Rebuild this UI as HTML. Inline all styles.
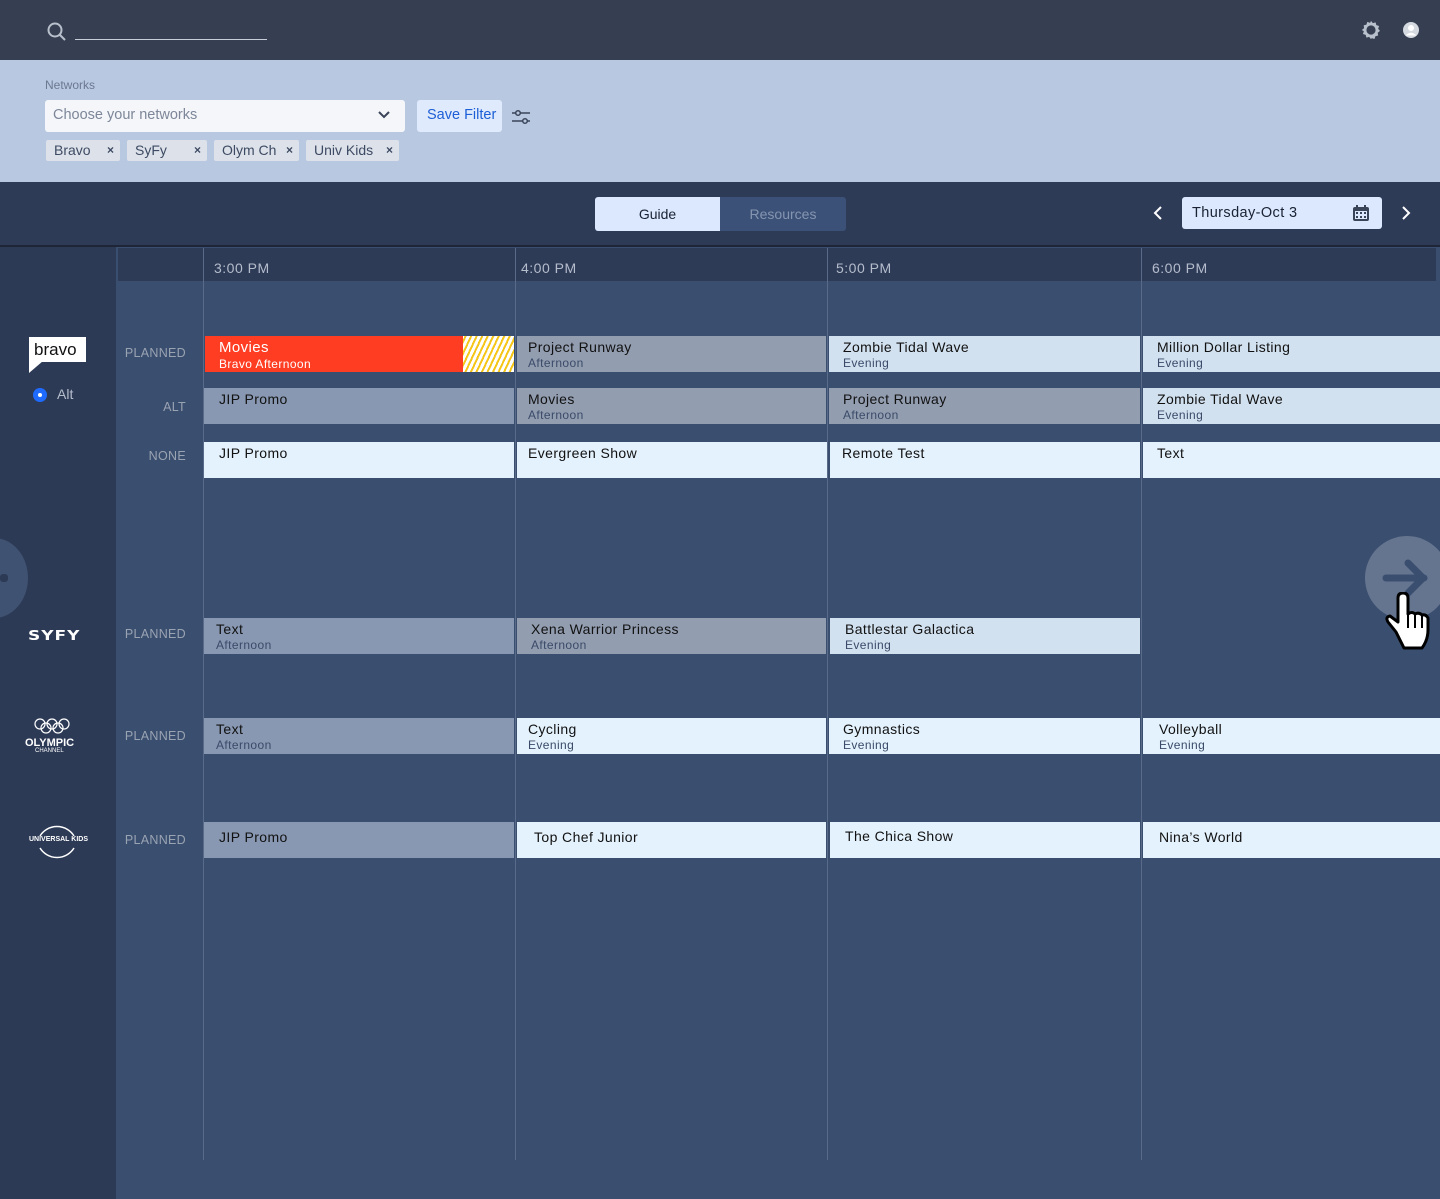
<!DOCTYPE html><html><head><style>
*{margin:0;padding:0;box-sizing:border-box}
body{width:1440px;height:1199px;overflow:hidden;background:#3a4e6f;font-family:"Liberation Sans",sans-serif;position:relative}
.a{position:absolute}
.b{position:absolute;height:36px;padding:3px 0 0 14px;color:#111;font-size:14px;letter-spacing:.4px}
.b small{display:block;font-size:12px;color:#3a4a68;margin-top:1px}
.g{background:#929db0}.gb{background:#8898b2}.l{background:#d2e1f0}.w{background:#e4f2fd}
.lab{position:absolute;width:70px;text-align:right;left:116px;color:#9aa3b2;font-size:12.5px;letter-spacing:.3px}
.vl{position:absolute;top:248px;height:912px;width:1px;background:#5a6b89}
.tm{position:absolute;top:260px;color:#b5bdcc;font-size:14px;letter-spacing:.5px}
.chip{position:absolute;top:140px;height:21px;background:#dde2ea;border-radius:2px;color:#3d4a63;font-size:14px;padding:2px 0 0 8px;white-space:nowrap}
.chip i{position:absolute;right:6px;top:3px;font-style:normal;font-size:12px;font-weight:bold}
</style></head><body>
<div class="a" style="left:0;top:0;width:1440px;height:60px;background:#363f52"></div>
<svg class="a" style="left:46px;top:21px" width="22" height="22"><circle cx="9" cy="9" r="6.5" stroke="#b8c0cc" stroke-width="2" fill="none"/><path d="M14 14l5 5" stroke="#b8c0cc" stroke-width="2"/></svg>
<div class="a" style="left:75px;top:39px;width:192px;height:1px;background:#c8ced8"></div>
<svg class="a" style="left:1360px;top:19px" width="22" height="22" viewBox="0 0 24 24"><path d="M12 2l2 2.5 3-.8.8 3 3 1-1 3 2 2.3-2.5 2 .5 3-3 .8-1 3-3-1L12 22l-2-2.5-3 .8-.8-3-3-1 1-3L2 12l2.5-2-.5-3 3-.8 1-3 3 1z" fill="#b8c0cc"/><circle cx="12" cy="12" r="5" fill="#363f52"/></svg>
<svg class="a" style="left:1402px;top:21px" width="18" height="18"><circle cx="9" cy="9" r="8" fill="#d5d9e0"/><circle cx="9" cy="7" r="3" fill="#fff"/><path d="M3.5 14.5Q9 9 14.5 14.5" fill="#fff"/></svg>
<div class="a" style="left:0;top:60px;width:1440px;height:122px;background:#b7c8e0"></div>
<div class="a" style="left:45px;top:78px;font-size:12px;color:#6c7890">Networks</div>
<div class="a" style="left:45px;top:100px;width:360px;height:32px;background:#f4f6f9;border-radius:3px;color:#7d8799;font-size:14.5px;padding:7px 0 0 8px">Choose your networks</div>
<svg class="a" style="left:377px;top:110px" width="14" height="10"><path d="M2 2l5 5 5-5" stroke="#3a4458" stroke-width="2" fill="none"/></svg>
<div class="a" style="left:417px;top:100px;width:85px;height:32px;background:#dfeafc;border-radius:3px;color:#1d5fd6;font-size:14.5px;padding:7px 0 0 10px">Save Filter</div>
<svg class="a" style="left:511px;top:108px" width="20" height="18"><path d="M1 5h18M1 13h18" stroke="#3a4458" stroke-width="1.6"/><circle cx="7" cy="5" r="2.3" fill="#b7c8e0" stroke="#3a4458" stroke-width="1.5"/><circle cx="14" cy="13" r="2.3" fill="#b7c8e0" stroke="#3a4458" stroke-width="1.5"/></svg>
<div class="chip" style="left:46px;width:74px">Bravo<i>×</i></div>
<div class="chip" style="left:127px;width:80px">SyFy<i>×</i></div>
<div class="chip" style="left:214px;width:85px">Olym Ch<i>×</i></div>
<div class="chip" style="left:306px;width:93px">Univ Kids<i>×</i></div>
<div class="a" style="left:0;top:182px;width:1440px;height:64px;background:#2e3b57"></div>
<div class="a" style="left:0;top:245px;width:1440px;height:2px;background:#1e2536"></div>
<div class="a" style="left:595px;top:197px;width:125px;height:34px;background:#dbe8fd;border-radius:3px 0 0 3px;text-align:center;padding-top:9px;font-size:14px;color:#1a2233">Guide</div>
<div class="a" style="left:720px;top:197px;width:126px;height:34px;background:#3c5177;border-radius:0 3px 3px 0;text-align:center;padding-top:9px;font-size:14px;color:#8595b1">Resources</div>
<svg class="a" style="left:1152px;top:205px" width="12" height="16"><path d="M9 2L3 8l6 6" stroke="#fff" stroke-width="2" fill="none"/></svg>
<div class="a" style="left:1182px;top:197px;width:200px;height:32px;background:#dbe8fd;border-radius:3px;padding:8px 0 0 10px;font-size:14.5px;color:#1a2233;letter-spacing:.4px">Thursday-Oct 3</div>
<svg class="a" style="left:1351px;top:203px" width="20" height="20"><rect x="2" y="4" width="16" height="14" rx="2" fill="#3a4458"/><rect x="4" y="8" width="12" height="8" fill="#dbe8fd"/><path d="M6 2v4M14 2v4" stroke="#3a4458" stroke-width="2"/><g fill="#3a4458"><rect x="5" y="9" width="2" height="2"/><rect x="9" y="9" width="2" height="2"/><rect x="13" y="9" width="2" height="2"/><rect x="5" y="13" width="2" height="2"/><rect x="9" y="13" width="2" height="2"/><rect x="13" y="13" width="2" height="2"/></g></svg>
<svg class="a" style="left:1400px;top:205px" width="12" height="16"><path d="M3 2l6 6-6 6" stroke="#fff" stroke-width="2" fill="none"/></svg>
<div class="a" style="left:0;top:247px;width:116px;height:952px;background:#2d3a56"></div>
<div class="a" style="left:118px;top:248px;width:1318px;height:33px;background:#2e3b57"></div>
<div class="vl" style="left:203px"></div><div class="vl" style="left:515px"></div><div class="vl" style="left:827px"></div><div class="vl" style="left:1141px"></div>
<div class="tm" style="left:214px">3:00 PM</div><div class="tm" style="left:521px">4:00 PM</div><div class="tm" style="left:836px">5:00 PM</div><div class="tm" style="left:1152px">6:00 PM</div>
<div class="a" style="left:29px;top:337px;width:57px;height:25px;background:#fff;color:#111;font-size:17px;padding:3px 0 0 5px">bravo</div>
<svg class="a" style="left:29px;top:361px" width="14" height="12"><path d="M0 0h14L0 12z" fill="#fff"/></svg>
<div class="a" style="left:33px;top:388px;width:14px;height:14px;border-radius:50%;background:#1f6bff"></div><div class="a" style="left:38px;top:393px;width:4px;height:4px;border-radius:50%;background:#fff"></div>
<div class="a" style="left:57px;top:386px;color:#b5bdcc;font-size:14px">Alt</div>
<div class="a" style="left:28px;top:626px;color:#fff;font-weight:bold;font-size:17px;letter-spacing:1px;font-family:'DejaVu Sans',sans-serif;transform:scaleY(.8)">SYFY</div>
<svg class="a" style="left:34px;top:718px" width="36" height="16"><g stroke="#fff" stroke-width="1.2" fill="none"><circle cx="6" cy="6" r="5"/><circle cx="18" cy="6" r="5"/><circle cx="30" cy="6" r="5"/><circle cx="12" cy="10" r="5"/><circle cx="24" cy="10" r="5"/></g></svg>
<div class="a" style="left:25px;top:737px;color:#fff;font-weight:bold;font-size:11px">OLYMPIC</div>
<div class="a" style="left:35px;top:748px;color:#fff;font-size:6px">CHANNEL</div>
<svg class="a" style="left:36px;top:820px" width="42" height="44"><path d="M4 16A20 20 0 0 1 38 16M4 28A20 20 0 0 0 38 28" stroke="#fff" stroke-width="1.5" fill="none"/></svg>
<div class="a" style="left:29px;top:836px;color:#fff;font-weight:bold;font-size:7px">UNIVERSAL KIDS</div>
<div class="lab" style="top:346px">PLANNED</div><div class="lab" style="top:400px">ALT</div><div class="lab" style="top:449px">NONE</div>
<div class="lab" style="top:627px">PLANNED</div><div class="lab" style="top:729px">PLANNED</div><div class="lab" style="top:833px">PLANNED</div>
<div class="b" style="left:205px;top:336px;width:258px;background:#ff3d22;color:#fff;font-size:15px">Movies<small style="color:#fff">Bravo Afternoon</small></div>
<div class="a" style="left:463px;top:336px;width:51px;height:36px;background:repeating-linear-gradient(-65deg,#fff 0 3px,#f5c518 3px 5px)"></div>
<div class="b g" style="left:517px;top:336px;width:309px;padding-left:11px">Project Runway<small>Afternoon</small></div>
<div class="b l" style="left:829px;top:336px;width:311px">Zombie Tidal Wave<small>Evening</small></div>
<div class="b l" style="left:1143px;top:336px;width:297px">Million Dollar Listing<small>Evening</small></div>
<div class="b gb" style="left:204px;top:388px;width:310px;padding-left:15px">JIP Promo</div>
<div class="b g" style="left:517px;top:388px;width:309px;padding-left:11px">Movies<small>Afternoon</small></div>
<div class="b g" style="left:829px;top:388px;width:311px">Project Runway<small>Afternoon</small></div>
<div class="b l" style="left:1143px;top:388px;width:297px">Zombie Tidal Wave<small>Evening</small></div>
<div class="b w" style="left:204px;top:442px;width:310px;padding-left:15px">JIP Promo</div>
<div class="b w" style="left:517px;top:442px;width:310px;padding-left:11px">Evergreen Show</div>
<div class="b w" style="left:830px;top:442px;width:310px;padding-left:12px">Remote Test</div>
<div class="b w" style="left:1143px;top:442px;width:297px">Text</div>
<div class="b gb" style="left:204px;top:618px;width:310px;padding-left:12px">Text<small>Afternoon</small></div>
<div class="b g" style="left:517px;top:618px;width:309px">Xena Warrior Princess<small>Afternoon</small></div>
<div class="b l" style="left:830px;top:618px;width:310px;padding-left:15px">Battlestar Galactica<small>Evening</small></div>
<div class="b gb" style="left:204px;top:718px;width:310px;padding-left:12px">Text<small>Afternoon</small></div>
<div class="b w" style="left:517px;top:718px;width:309px;padding-left:11px">Cycling<small>Evening</small></div>
<div class="b w" style="left:829px;top:718px;width:311px">Gymnastics<small>Evening</small></div>
<div class="b w" style="left:1143px;top:718px;width:297px;padding-left:16px">Volleyball<small>Evening</small></div>
<div class="b gb" style="left:204px;top:822px;width:310px;padding-left:15px;padding-top:7px">JIP Promo</div>
<div class="b w" style="left:517px;top:822px;width:309px;padding-left:17px;padding-top:7px">Top Chef Junior</div>
<div class="b w" style="left:830px;top:822px;width:310px;padding-left:15px;padding-top:6px">The Chica Show</div>
<div class="b w" style="left:1143px;top:822px;width:297px;padding-left:16px;padding-top:7px">Nina’s World</div>
<div class="a" style="left:-40px;top:538px;width:68px;height:80px;border-radius:50%;background:#3f5272"></div>
<div class="a" style="left:0;top:574px;width:8px;height:8px;background:#2d3a56;border-radius:3px"></div>
<div class="a" style="left:1365px;top:536px;width:84px;height:84px;border-radius:50%;background:#66758f"></div>
<svg class="a" style="left:1382px;top:558px" width="50" height="40"><path d="M4 20h38M26 5l15 15-15 15" stroke="#3a4e6f" stroke-width="7" fill="none" stroke-linecap="round"/></svg>
<svg class="a" style="left:1384px;top:592px" width="56" height="60"><path d="M12 40L4 30q-3-5 2-6l8 6V6q0-5 5-5t5 5v16q4-3 7 0 4-2 7 1 4-1 6 3v12q0 10-6 18H20z" fill="#fff" stroke="#000" stroke-width="3" stroke-linejoin="round"/><path d="M24 22v14M31 22v14M38 24v12" stroke="#000" stroke-width="2"/></svg>
</body></html>
